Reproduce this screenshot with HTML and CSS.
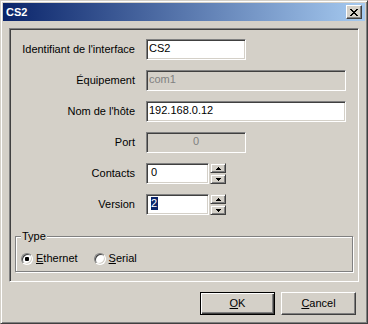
FILE: index.html
```html
<!DOCTYPE html>
<html lang="fr">
  <head>
    <meta charset="UTF-8" />
    <meta name="viewport" content="width=device-width, initial-scale=1.0" />
    <title>CS2</title>
    <link rel="stylesheet" href="styles.css">
  </head>
  <body>
    <div class="dialog">
      <!-- Barre de titre -->
      <div class="dialog__titlebar">
        <span class="dialog__title">CS2</span>
        <button class="dialog__close" aria-label="Fermer">
          <svg width="8" height="7" viewBox="0 0 8 7" shape-rendering="crispEdges">
            <path fill="#000" d="M0 0h2v1h-2zM6 0h2v1h-2zM1 1h2v1h-2zM5 1h2v1h-2zM2 2h4v1h-4zM3 3h2v1h-2zM2 4h4v1h-4zM1 5h2v1h-2zM5 5h2v1h-2zM0 6h2v1h-2zM6 6h2v1h-2z"/>
          </svg>
        </button>
      </div>

      <div class="dialog__body">
        <div class="dialog__panel">
          <div class="form">
            <span class="form__label">Identifiant de l'interface</span>
            <div class="field field--short">CS2</div>

            <span class="form__label">Équipement</span>
            <div class="field field--long field--disabled">com1</div>

            <span class="form__label">Nom de l'hôte</span>
            <div class="field field--long">192.168.0.12</div>

            <span class="form__label">Port</span>
            <div class="field field--short field--disabled field--center">0</div>

            <span class="form__label">Contacts</span>
            <div class="spin">
              <div class="field field--spin">0</div>
              <div class="spin__buttons">
                <span class="spin__btn">
                  <svg width="5" height="3" viewBox="0 0 5 3" shape-rendering="crispEdges"><path d="M2 0h1v1h1v1h1v1h-5v-1h1v-1h1z"/></svg>
                </span>
                <span class="spin__btn">
                  <svg width="5" height="3" viewBox="0 0 5 3" shape-rendering="crispEdges"><path d="M0 0h5v1h-1v1h-1v1h-1v-1h-1v-1h-1z"/></svg>
                </span>
              </div>
            </div>

            <span class="form__label">Version</span>
            <div class="spin">
              <div class="field field--spin"><span class="field__selection">2</span></div>
              <div class="spin__buttons">
                <span class="spin__btn">
                  <svg width="5" height="3" viewBox="0 0 5 3" shape-rendering="crispEdges"><path d="M2 0h1v1h1v1h1v1h-5v-1h1v-1h1z"/></svg>
                </span>
                <span class="spin__btn">
                  <svg width="5" height="3" viewBox="0 0 5 3" shape-rendering="crispEdges"><path d="M0 0h5v1h-1v1h-1v1h-1v-1h-1v-1h-1z"/></svg>
                </span>
              </div>
            </div>
          </div>

          <!-- Groupe : type d'interface -->
          <fieldset class="group">
            <legend class="group__title">Type</legend>
            <div class="group__options">
              <label class="radio">
                <span class="radio__circle radio__circle--checked"></span>
                <span><u>E</u>thernet</span>
              </label>
              <label class="radio">
                <span class="radio__circle"></span>
                <span><u>S</u>erial</span>
              </label>
            </div>
          </fieldset>
        </div>

        <div class="dialog__actions">
          <button class="btn btn--default"><u>O</u>K</button>
          <button class="btn"><u>C</u>ancel</button>
        </div>
      </div>
    </div>
  </body>
</html>
```

FILE: styles.css
```css
/* Base */
* {
  box-sizing: border-box;
}

body {
  margin: 0;
  font-family: "Liberation Sans", Arial, sans-serif;
  font-size: 11px;
  line-height: 13px;
  color: #000;
  background-color: #d4d0c8;
}

/* Fenêtre */
.dialog {
  width: 368px;
  height: 324px;
  padding: 2px;
  display: flex;
  flex-direction: column;
  background-color: #d4d0c8;
  border: 1px solid;
  border-color: #d4d0c8 #404040 #404040 #d4d0c8;
  box-shadow: inset 1px 1px #fff, inset -1px -1px #808080;
}

.dialog__titlebar {
  height: 18px;
  display: flex;
  align-items: center;
  justify-content: space-between;
  padding: 0 3px 0 3px;
  background: linear-gradient(to right, #0a246a, #a6caf0);
}

.dialog__title {
  color: #fff;
  font-weight: bold;
}

.dialog__close {
  width: 16px;
  height: 14px;
  padding: 0;
  display: flex;
  align-items: center;
  justify-content: center;
  background-color: #d4d0c8;
  border: 1px solid;
  border-color: #fff #404040 #404040 #fff;
  box-shadow: inset -1px -1px #808080;
}

.dialog__body {
  flex: 1;
  padding: 7px 6px 0;
}

.dialog__panel {
  height: 254px;
  border: 1px solid;
  border-color: #808080 #fff #fff #808080;
  box-shadow: inset 1px 1px #404040, inset -1px -1px #d4d0c8;
  padding: 10px 1px 0;
}

/* Formulaire */
.form {
  display: grid;
  grid-template-columns: 124px 1fr;
  grid-auto-rows: 21px;
  column-gap: 11px;
  row-gap: 10px;
}

.form__label {
  align-self: center;
  text-align: right;
}

.field {
  height: 21px;
  padding: 0 2px;
  line-height: 17px;
  background-color: #fff;
  border: 1px solid;
  border-color: #808080 #fff #fff #808080;
  box-shadow: inset 1px 1px #404040, inset -1px -1px #d4d0c8;
  white-space: nowrap;
}

.field--short {
  width: 100px;
}

.field--long {
  width: 200px;
}

.field--spin {
  width: 63px;
  padding-left: 4px;
}

.field--disabled {
  background-color: #d4d0c8;
  color: #808080;
}

.field--center {
  text-align: center;
}

.field__selection {
  display: inline-block;
  padding: 0 1px 0 0;
  line-height: 13px;
  background-color: #0a246a;
  color: #fff;
}

.spin {
  display: flex;
  gap: 1px;
}

.spin__buttons {
  display: flex;
  flex-direction: column;
  gap: 1px;
}

.spin__btn {
  width: 16px;
  height: 10px;
  display: flex;
  align-items: center;
  justify-content: center;
  border: 1px solid;
  border-color: #d4d0c8 #404040 #404040 #d4d0c8;
  box-shadow: inset 1px 1px #fff, inset -1px -1px #808080;
}

/* Groupe Type */
.group {
  margin: 15px 4px 0;
  padding: 0 0 6px 5px;
  border: 1px solid #808080;
  box-shadow: inset 1px 1px #fff, 1px 1px #fff;
}

.group__title {
  padding: 0 1px;
  background-color: #d4d0c8;
}

.group__options {
  display: flex;
  gap: 16px;
  padding-top: 9px;
}

.radio {
  display: flex;
  align-items: center;
  gap: 3px;
}

.radio__circle {
  width: 12px;
  height: 12px;
  display: flex;
  align-items: center;
  justify-content: center;
  border-radius: 50%;
  background-color: #fff;
  border: 1px solid;
  border-color: #808080 #fff #fff #808080;
  box-shadow: inset 1px 1px #404040, inset -1px -1px #d4d0c8;
}

.radio__circle--checked::after {
  content: "";
  width: 4px;
  height: 4px;
  border-radius: 1px;
  background-color: #000;
}

/* Boutons */
.dialog__actions {
  display: flex;
  justify-content: flex-end;
  gap: 6px;
  margin-top: 10px;
  padding-right: 3px;
}

.btn {
  width: 75px;
  height: 23px;
  padding: 0;
  font: inherit;
  color: #000;
  background-color: #d4d0c8;
  border: 1px solid;
  border-color: #fff #404040 #404040 #fff;
  box-shadow: inset -1px -1px #808080;
}

.btn--default {
  border-color: #000;
  box-shadow: inset 1px 1px #fff, inset -1px -1px #404040, inset -2px -2px #808080;
}
```
